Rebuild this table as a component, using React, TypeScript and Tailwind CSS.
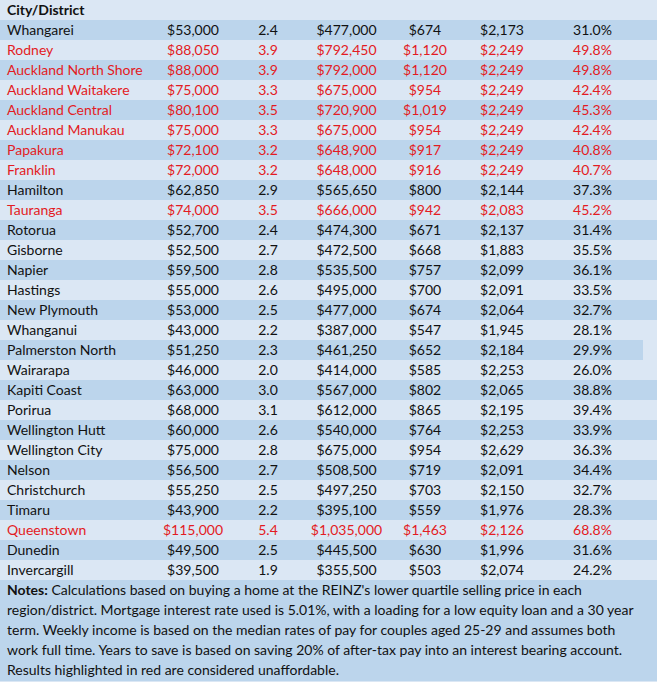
const rows: [string, string, string, string, string, string, string, boolean][] = [
  ["Whangarei", "$53,000", "2.4", "$477,000", "$674", "$2,173", "31.0%", false],
  ["Rodney", "$88,050", "3.9", "$792,450", "$1,120", "$2,249", "49.8%", true],
  ["Auckland North Shore", "$88,000", "3.9", "$792,000", "$1,120", "$2,249", "49.8%", true],
  ["Auckland Waitakere", "$75,000", "3.3", "$675,000", "$954", "$2,249", "42.4%", true],
  ["Auckland Central", "$80,100", "3.5", "$720,900", "$1,019", "$2,249", "45.3%", true],
  ["Auckland Manukau", "$75,000", "3.3", "$675,000", "$954", "$2,249", "42.4%", true],
  ["Papakura", "$72,100", "3.2", "$648,900", "$917", "$2,249", "40.8%", true],
  ["Franklin", "$72,000", "3.2", "$648,000", "$916", "$2,249", "40.7%", true],
  ["Hamilton", "$62,850", "2.9", "$565,650", "$800", "$2,144", "37.3%", false],
  ["Tauranga", "$74,000", "3.5", "$666,000", "$942", "$2,083", "45.2%", true],
  ["Rotorua", "$52,700", "2.4", "$474,300", "$671", "$2,137", "31.4%", false],
  ["Gisborne", "$52,500", "2.7", "$472,500", "$668", "$1,883", "35.5%", false],
  ["Napier", "$59,500", "2.8", "$535,500", "$757", "$2,099", "36.1%", false],
  ["Hastings", "$55,000", "2.6", "$495,000", "$700", "$2,091", "33.5%", false],
  ["New Plymouth", "$53,000", "2.5", "$477,000", "$674", "$2,064", "32.7%", false],
  ["Whanganui", "$43,000", "2.2", "$387,000", "$547", "$1,945", "28.1%", false],
  ["Palmerston North", "$51,250", "2.3", "$461,250", "$652", "$2,184", "29.9%", false],
  ["Wairarapa", "$46,000", "2.0", "$414,000", "$585", "$2,253", "26.0%", false],
  ["Kapiti Coast", "$63,000", "3.0", "$567,000", "$802", "$2,065", "38.8%", false],
  ["Porirua", "$68,000", "3.1", "$612,000", "$865", "$2,195", "39.4%", false],
  ["Wellington Hutt", "$60,000", "2.6", "$540,000", "$764", "$2,253", "33.9%", false],
  ["Wellington City", "$75,000", "2.8", "$675,000", "$954", "$2,629", "36.3%", false],
  ["Nelson", "$56,500", "2.7", "$508,500", "$719", "$2,091", "34.4%", false],
  ["Christchurch", "$55,250", "2.5", "$497,250", "$703", "$2,150", "32.7%", false],
  ["Timaru", "$43,900", "2.2", "$395,100", "$559", "$1,976", "28.3%", false],
  ["Queenstown", "$115,000", "5.4", "$1,035,000", "$1,463", "$2,126", "68.8%", true],
  ["Dunedin", "$49,500", "2.5", "$445,500", "$630", "$1,996", "31.6%", false],
  ["Invercargill", "$39,500", "1.9", "$355,500", "$503", "$2,074", "24.2%", false],
];

const cols = "grid grid-cols-[155px_76px_74px_83px_74px_80px_101px]";

export default function App() {
  return (
    <div
      className="w-[657px] h-[682px] overflow-hidden bg-[#dbe7f4] text-[14px] leading-5 text-[#111]"
      style={{ fontFamily: "Lato, 'Open Sans', sans-serif" }}
    >
      <div className="h-5 pl-[7px] font-bold">City/District</div>
      {rows.map(([name, a, b, c, d, e, f, red], i) => {
        const dark = i % 2 === 0;
        const partial = name === "Palmerston North";
        return (
          <div
            key={name}
            className={`h-5 ${dark && !partial ? "bg-[#bcd5ec]" : "bg-[#dbe7f4]"} ${red ? "text-[#e31b23]" : ""}`}
          >
            <div className={`${cols} ${partial ? "w-[643px] bg-[#bcd5ec]" : ""}`}>
              <div className="pl-[7px] whitespace-nowrap">{name}</div>
              <div className="text-center">{a}</div>
              <div className="text-center">{b}</div>
              <div className="text-center">{c}</div>
              <div className="text-center">{d}</div>
              <div className="text-center">{e}</div>
              <div className="text-center">{f}</div>
            </div>
          </div>
        );
      })}
      <div className="h-[101px] bg-[#bcd5ec] px-[7px] whitespace-nowrap">
        <b>Notes:</b> Calculations based on buying a home at the REINZ's lower quartile selling price in each
        <br />
        region/district. Mortgage interest rate used is 5.01%, with a loading for a low equity loan and a 30 year
        <br />
        term. Weekly income is based on the median rates of pay for couples aged 25-29 and assumes both
        <br />
        work full time. Years to save is based on saving 20% of after-tax pay into an interest bearing account.
        <br />
        Results highlighted in red are considered unaffordable.
      </div>
    </div>
  );
}
